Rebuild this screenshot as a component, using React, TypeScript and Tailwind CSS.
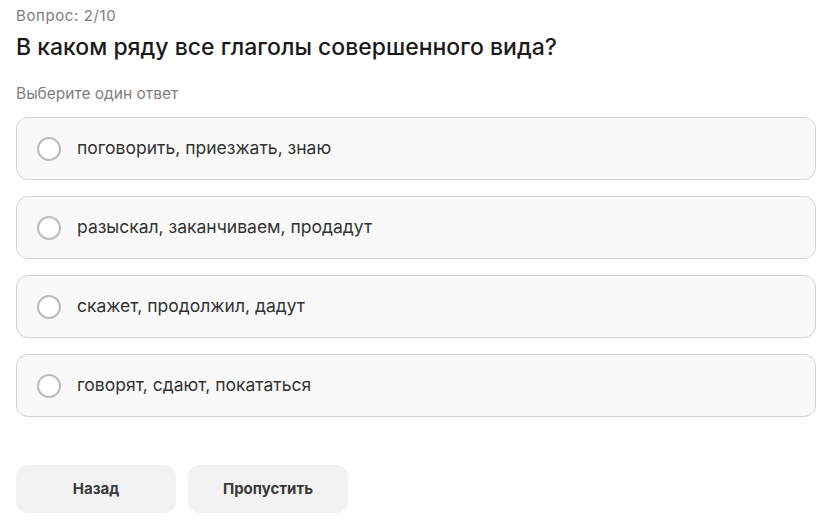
const options = [
  "поговорить, приезжать, знаю",
  "разыскал, заканчиваем, продадут",
  "скажет, продолжил, дадут",
  "говорят, сдают, покататься",
];

export default function App() {
  return (
    <div
      className="min-h-screen bg-white pl-4 pt-[6px] text-[#222]"
      style={{ fontFamily: "Inter, 'Noto Sans', sans-serif" }}
    >
      <div className="text-[15px] leading-[20px] tracking-[0.6px] text-[#808080]">Вопрос: 2/10</div>
      <h1 className="mt-[6px] text-[23px] leading-[30px] font-medium text-[#1a1a1a]">
        В каком ряду все глаголы совершенного вида?
      </h1>
      <div className="mt-[22px] text-[15.5px] leading-[20px] text-[#808080]">Выберите один ответ</div>

      <div className="mt-[13px] flex w-[800px] flex-col gap-4">
        {options.map((o) => (
          <label
            key={o}
            className="flex h-[63px] cursor-pointer items-center gap-4 rounded-xl border border-[#d3d3d3] bg-[#f9f9f9] px-5"
          >
            <span className="h-6 w-6 shrink-0 rounded-full border-2 border-[#bdbdbd] bg-white" />
            <span className="text-[17.5px] text-[#333]">{o}</span>
          </label>
        ))}
      </div>

      <div className="mt-[48px] flex gap-3">
        <button className="h-12 w-40 rounded-xl bg-[#f2f2f2] text-[15px] font-bold text-[#3a3a3a]">
          Назад
        </button>
        <button className="h-12 w-40 rounded-xl bg-[#f2f2f2] text-[15px] font-bold text-[#3a3a3a]">
          Пропустить
        </button>
      </div>
    </div>
  );
}
